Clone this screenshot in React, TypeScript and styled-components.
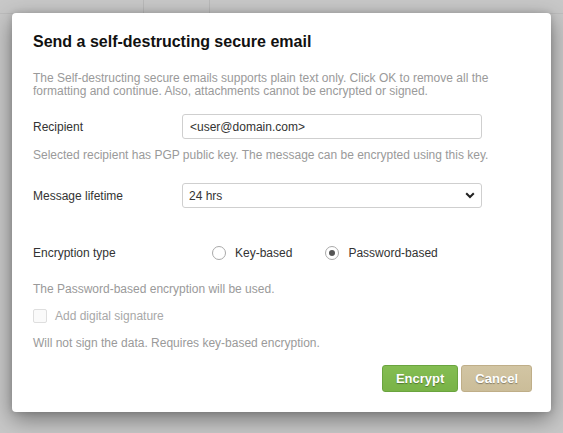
import React from 'react';
import styled, { createGlobalStyle } from 'styled-components';

const GlobalStyle = createGlobalStyle`
    html, body {
        margin: 0;
        padding: 0;
        width: 563px;
        height: 433px;
        overflow: hidden;
        background: #c8c8c8;
        font-family: "Liberation Sans", Arial, sans-serif;
    }
`;

const Page = styled.div`
    position: relative;
    width: 563px;
    height: 433px;
    background: #c8c8c8;
`;

const PageToolbar = styled.div`
    display: flex;
    height: 13px;
    border-bottom: 1px solid #bdbdbd;
`;

const ToolbarCell = styled.div<{ $width: number }>`
    width: ${(p) => p.$width}px;
    border-right: 1px solid #b9b9b9;
`;

const Overlay = styled.div`
    position: absolute;
    inset: 0;
    padding: 13px 0 0 12px;
`;

const Dialog = styled.div`
    display: flex;
    flex-direction: column;
    box-sizing: border-box;
    width: 539px;
    height: 399px;
    padding: 20px 19px 0 21px;
    background: #fff;
    border-radius: 4px;
    box-shadow: 0 7px 22px rgba(0, 0, 0, 0.42), 0 0 6px rgba(0, 0, 0, 0.15);
`;

const Title = styled.h2`
    margin: 0;
    font-size: 16px;
    line-height: 18px;
    font-weight: bold;
    color: #111;
`;

const Note = styled.p<{ $top: number }>`
    margin: ${(p) => p.$top}px 0 0;
    font-size: 12px;
    line-height: 13px;
    color: #9a9a9a;
`;

const FieldRow = styled.div<{ $top: number }>`
    display: flex;
    align-items: center;
    margin-top: ${(p) => p.$top}px;
`;

const Label = styled.label`
    width: 149px;
    flex-shrink: 0;
    font-size: 12px;
    color: #333;
`;

const TextInput = styled.input`
    box-sizing: border-box;
    width: 300px;
    height: 25px;
    padding: 0 7px;
    border: 1px solid #cfcfcf;
    border-radius: 3px;
    font-family: "Liberation Sans", Arial, sans-serif;
    font-size: 12px;
    color: #333;
    outline: none;
`;

const SelectWrap = styled.div`
    position: relative;
    width: 300px;
    height: 25px;
`;

const Select = styled.select`
    box-sizing: border-box;
    width: 100%;
    height: 100%;
    padding: 0 6px;
    appearance: none;
    background: #fff;
    border: 1px solid #cfcfcf;
    border-radius: 3px;
    font-family: "Liberation Sans", Arial, sans-serif;
    font-size: 12px;
    color: #333;
    outline: none;
`;

const Chevron = styled.svg`
    position: absolute;
    right: 7px;
    top: 9px;
    pointer-events: none;
`;

const RadioGroup = styled.div`
    display: flex;
    align-items: center;
    margin-left: 30px;
    gap: 33px;
`;

const RadioOption = styled.label`
    display: flex;
    align-items: center;
    gap: 9px;
    font-size: 12px;
    color: #333;
`;

const RadioDot = styled.span<{ $checked?: boolean }>`
    box-sizing: border-box;
    display: flex;
    align-items: center;
    justify-content: center;
    width: 14px;
    height: 14px;
    border: 1px solid #a9a9a9;
    border-radius: 50%;
    background: #fff;

    &::after {
        content: '';
        display: ${(p) => (p.$checked ? 'block' : 'none')};
        width: 6px;
        height: 6px;
        border-radius: 50%;
        background: #555;
    }
`;

const CheckRow = styled.label`
    display: flex;
    align-items: center;
    gap: 8px;
    margin-top: 13px;
    font-size: 12px;
    color: #a8a8a8;
`;

const CheckBox = styled.span`
    box-sizing: border-box;
    width: 14px;
    height: 14px;
    border: 1px solid #dedede;
    border-radius: 2px;
    background: #fafafa;
`;

const Footer = styled.div`
    display: flex;
    justify-content: flex-end;
    gap: 3px;
    margin-top: 15px;
`;

const Button = styled.button<{ $variant: 'primary' | 'secondary' }>`
    height: 27px;
    padding: 0 13px;
    border-radius: 3px;
    border: 1px solid ${(p) => (p.$variant === 'primary' ? '#6aa43f' : '#bfae88')};
    background: ${(p) =>
        p.$variant === 'primary'
            ? 'linear-gradient(#84bd52, #79b347)'
            : 'linear-gradient(#d2c5a3, #cbbd99)'};
    color: #fff;
    font-family: "Liberation Sans", Arial, sans-serif;
    font-size: 13px;
    font-weight: bold;
    text-shadow: 0 1px 1px rgba(0, 0, 0, 0.35);
    cursor: pointer;
`;

const App = () => {
    return (
        <>
            <GlobalStyle />
            <Page>
                <PageToolbar>
                    <ToolbarCell $width={143} />
                    <ToolbarCell $width={65} />
                </PageToolbar>
                <Overlay>
                    <Dialog>
                        <Title>Send a self-destructing secure email</Title>
                        <Note $top={21}>
                            The Self-destructing secure emails supports plain text only. Click OK
                            to remove all the formatting and continue. Also, attachments cannot be
                            encrypted or signed.
                        </Note>
                        <FieldRow $top={16}>
                            <Label>Recipient</Label>
                            <TextInput defaultValue="<user@domain.com>" />
                        </FieldRow>
                        <Note $top={10}>
                            Selected recipient has PGP public key. The message can be encrypted
                            using this key.
                        </Note>
                        <FieldRow $top={21}>
                            <Label>Message lifetime</Label>
                            <SelectWrap>
                                <Select defaultValue="24">
                                    <option value="24">24 hrs</option>
                                </Select>
                                <Chevron width="10" height="7" viewBox="0 0 10 7">
                                    <path
                                        d="M1.2 1.2 L5 5 L8.8 1.2"
                                        fill="none"
                                        stroke="#222"
                                        strokeWidth="2"
                                    />
                                </Chevron>
                            </SelectWrap>
                        </FieldRow>
                        <FieldRow $top={38}>
                            <Label>Encryption type</Label>
                            <RadioGroup>
                                <RadioOption>
                                    <RadioDot />
                                    Key-based
                                </RadioOption>
                                <RadioOption>
                                    <RadioDot $checked />
                                    Password-based
                                </RadioOption>
                            </RadioGroup>
                        </FieldRow>
                        <Note $top={23}>The Password-based encryption will be used.</Note>
                        <CheckRow>
                            <CheckBox />
                            Add digital signature
                        </CheckRow>
                        <Note $top={14}>Will not sign the data. Requires key-based encryption.</Note>
                        <Footer>
                            <Button $variant="primary">Encrypt</Button>
                            <Button $variant="secondary">Cancel</Button>
                        </Footer>
                    </Dialog>
                </Overlay>
            </Page>
        </>
    );
};

export default App;
